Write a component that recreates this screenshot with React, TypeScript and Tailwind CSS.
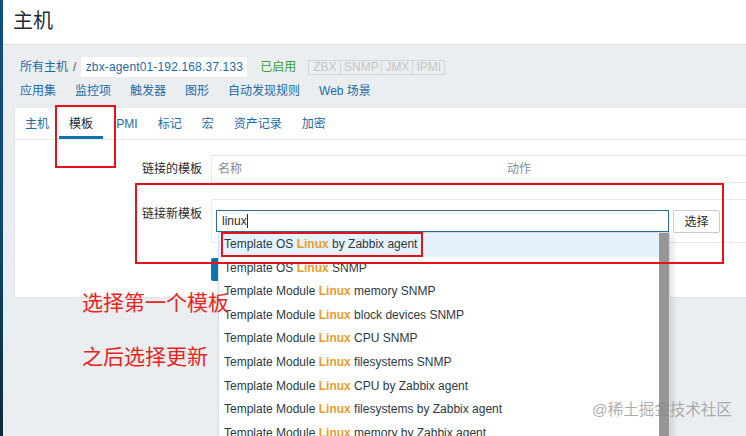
import React from 'react';

const tabs = ['主机', '模板', 'IPMI', '标记', '宏', '资产记录', '加密'];
const navLinks = ['应用集', '监控项', '触发器', '图形', '自动发现规则', 'Web 场景'];
const tags = [
  { label: 'ZBX', w: 'w-[31px]' },
  { label: 'SNMP', w: 'w-[41px]' },
  { label: 'JMX', w: 'w-[31px]' },
  { label: 'IPMI', w: 'w-[32px]' },
];

const options: [string, string][] = [
  ['Template OS ', ' by Zabbix agent'],
  ['Template OS ', ' SNMP'],
  ['Template Module ', ' memory SNMP'],
  ['Template Module ', ' block devices SNMP'],
  ['Template Module ', ' CPU SNMP'],
  ['Template Module ', ' filesystems SNMP'],
  ['Template Module ', ' CPU by Zabbix agent'],
  ['Template Module ', ' filesystems by Zabbix agent'],
  ['Template Module ', ' memory by Zabbix agent'],
];

export default function App() {
  return (
    <div className="relative w-[746px] h-[436px] overflow-hidden flex bg-[#ebeef0] text-[12px] text-[#1f2c33] [font-family:'Liberation_Sans','Noto_Sans_CJK_SC',sans-serif]">
      {/* sidebar edge */}
      <div className="w-[3px] shrink-0 bg-gradient-to-b from-[#11507a] via-[#0f4a70] to-[#0a2a40]" />

      <div className="flex-1 min-w-0 flex flex-col">
        <header className="h-[45px] shrink-0 bg-white border-b border-[#dcdfe1] pl-[10px] pt-[7px] text-[20px] leading-[28px]">
          主机
        </header>

        {/* breadcrumb */}
        <div className="mt-[12px] pl-[17px] h-[20px] flex items-center">
          <span className="text-[#1d6aa5]">所有主机</span>
          <span className="mx-[5px] text-[#555]">/</span>
          <span className="h-[20px] w-[166px] flex items-center justify-center bg-white text-[#1d6aa5] text-[12px] tracking-[0.15px]">
            zbx-agent01-192.168.37.133
          </span>
          <span className="ml-[13px] text-[#3e9d35]">已启用</span>
          <div className="ml-[12px] flex h-[15px] border border-[#d3d6d8]">
            {tags.map((t, i) => (
              <span
                key={t.label}
                className={`${t.w} flex items-center justify-center text-[12px] text-[#c3c6c8] ${i > 0 ? 'border-l border-[#d3d6d8]' : ''}`}
              >
                {t.label}
              </span>
            ))}
          </div>
        </div>

        {/* sub nav */}
        <div className="mt-[4px] pl-[17px] h-[20px] flex items-center gap-[19px] text-[#1d6aa5]">
          {navLinks.map((l) => (
            <span key={l}>{l}</span>
          ))}
        </div>

        {/* panel */}
        <div className="mt-[7px] ml-[11px] h-[190px] shrink-0 bg-white border-l border-b border-[#dfe3e6]">
          <div className="h-[32px] flex border-b border-[#e6e9eb]">
            {tabs.map((t) => (
              <div
                key={t}
                className={`h-[31px] px-[10px] pt-[3px] flex items-center border-b-[3px] ${
                  t === '模板' ? 'border-[#0f73ae] text-[#1f2c33]' : 'border-transparent text-[#1d6aa5]'
                }`}
              >
                {t}
              </div>
            ))}
          </div>

          {/* linked templates */}
          <div className="mt-[15px] flex">
            <div className="w-[196px] pr-[9px] flex items-center justify-end h-[28px]">链接的模板</div>
            <div className="flex-1 h-[28px] border-l border-t border-b border-[#e6e9eb] flex items-center text-[#7d8e98]">
              <span className="w-[295px] pl-[6px]">名称</span>
              <span>动作</span>
            </div>
          </div>

          {/* link new templates */}
          <div className="mt-[16px] flex">
            <div className="w-[196px] pr-[9px] pt-[6px] text-right">链接新模板</div>
            <div className="flex-1 h-[44px] border-l border-t border-b border-[#e6e9eb] pl-[4px] pt-[10px] flex items-start">
              <div className="w-[453px] h-[22px] border border-[#2a6f97] flex items-center pl-[5px]">
                linux<span className="w-px h-[14px] bg-[#1f2c33]" />
              </div>
              <button className="ml-[4px] w-[47px] h-[23px] border border-[#c9cdd0] rounded-[2px] bg-white text-[#1f2c33]">
                选择
              </button>
            </div>
          </div>

          <div className="mt-[15px] ml-[196px]">
            <button className="w-[62px] h-[23px] bg-[#0f73ae] text-white rounded-[2px]">更新</button>
          </div>
        </div>
      </div>

      {/* autocomplete dropdown */}
      <div className="absolute left-[218px] top-[232px] w-[452px] h-[220px] flex bg-white border border-[#d5dde2] shadow-[3px_3px_6px_rgba(0,0,0,0.12)]">
        <div className="flex-1">
          {options.map(([a, b], i) => (
            <div
              key={i}
              className={`h-[23.6px] leading-[23.6px] pl-[5px] whitespace-pre text-[#2b3a42] ${i === 0 ? 'bg-[#e6f2fb]' : ''}`}
            >
              <span>{a}</span>
              <span className="font-bold text-[#e99c2e]">Linux</span>
              <span>{b}</span>
            </div>
          ))}
        </div>
        <div className="w-[10px] bg-[#969696]" />
      </div>

      {/* red annotations */}
      <div className="absolute left-[55px] top-[105px] w-[61px] h-[63px] border-2 border-[#e0141a]" />
      <div className="absolute left-[135px] top-[183px] w-[589px] h-[81px] border-2 border-[#e0141a]" />
      <div className="absolute left-[221px] top-[232px] w-[202px] h-[25px] border-2 border-[#e0141a]" />
      <div className="absolute left-[82px] top-[291px] text-[21px] leading-[24px] text-[#e8241c]">选择第一个模板</div>
      <div className="absolute left-[82px] top-[345px] text-[21px] leading-[24px] text-[#e8241c]">之后选择更新</div>

      {/* watermark */}
      <div className="absolute left-[592px] top-[400px] text-[15.5px] leading-[20px] text-[#8a8a8a]/70">@稀土掘金技术社区</div>
    </div>
  );
}
